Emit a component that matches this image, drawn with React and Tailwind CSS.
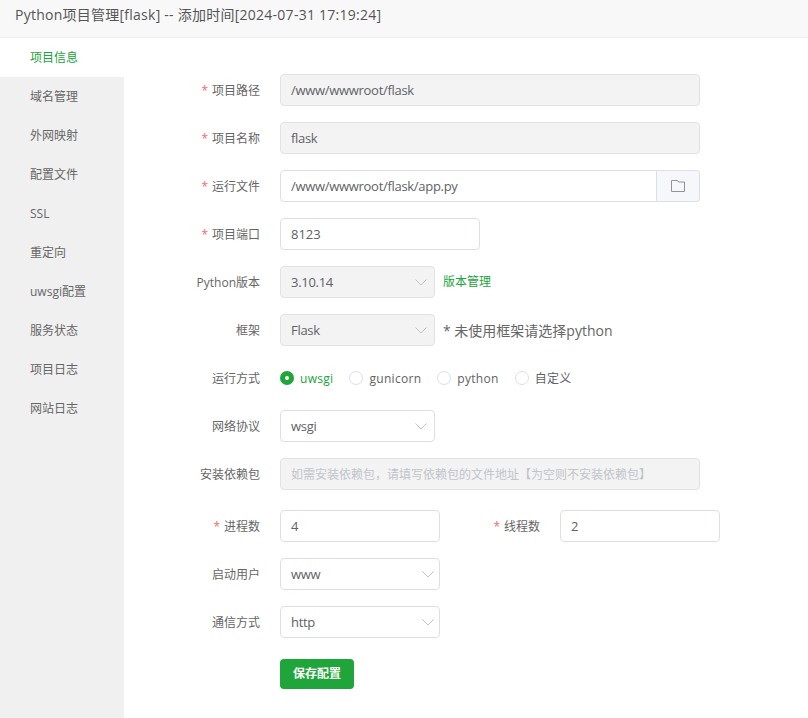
import React from "react";

const font = { fontFamily: '"Open Sans","Noto Sans CJK SC",sans-serif' };

const Chevron = () => (
  <svg width="14" height="14" viewBox="0 0 14 14" fill="none" stroke="#c0c4cc" strokeWidth="1" className="shrink-0">
    <path d="M1.5 4.5 L7 10 L12.5 4.5" />
  </svg>
);

function Label({ req, children }) {
  return (
    <div className="w-[260px] shrink-0 flex justify-end items-center pt-[2px] text-[12px] text-[#666]">
      {req && <span className="text-[#f56c6c] mr-[4px]">*</span>}
      <span>{children}</span>
    </div>
  );
}

function Box({ w, gray, children, cls = "" }) {
  return (
    <div className={`${w} h-8 shrink-0 flex items-center pl-[10px] border rounded-[4px] text-[13px] text-[#606266] ${gray ? "bg-[#f3f3f3] border-[#e2e2e2]" : "bg-white border-[#dcdfe6]"} ${cls}`}>
      <span className="pt-[2px] flex-1 min-w-0">{children}</span>
    </div>
  );
}

function Select({ w, gray, pr, children }) {
  return (
    <div className={`${w} ${pr} h-8 shrink-0 flex items-center justify-between pl-[10px] border rounded-[4px] text-[13px] text-[#606266] tracking-[-0.3px] ${gray ? "bg-[#f3f3f3] border-[#e2e2e2]" : "bg-white border-[#dcdfe6]"}`}>
      <span className="pt-[2px]">{children}</span>
      <Chevron />
    </div>
  );
}

function Row({ label, req, children, cls = "mb-4" }) {
  return (
    <div className={`flex items-center h-8 ${cls}`}>
      <Label req={req}>{label}</Label>
      <div className="ml-5 flex items-center">{children}</div>
    </div>
  );
}

function Radio({ on, children, cls = "" }) {
  return (
    <div className={`flex items-center ${cls}`}>
      {on ? (
        <span className="w-[14px] h-[14px] rounded-full bg-[#20a53a] flex items-center justify-center">
          <span className="w-1 h-1 rounded-full bg-white" />
        </span>
      ) : (
        <span className="w-[14px] h-[14px] rounded-full border border-[#dcdfe6] bg-white" />
      )}
      <span className={`ml-[6px] pt-[2px] text-[12px] tracking-[0.3px] ${on ? "text-[#20a53a]" : "text-[#606266]"}`}>{children}</span>
    </div>
  );
}

const menu = ["项目信息", "域名管理", "外网映射", "配置文件", "SSL", "重定向", "uwsgi配置", "服务状态", "项目日志", "网站日志"];

export default function App() {
  return (
    <div style={font} className="w-[808px] h-[718px] overflow-hidden bg-white flex flex-col">
      <div className="h-[38px] shrink-0 bg-[#f8f8f8] border-b border-[#eeeeee] pl-[15px] pb-[8px] flex items-center text-[14px] text-[#555] tracking-[0.25px]">
        Python项目管理[flask] -- 添加时间[2024-07-31 17:19:24]
      </div>
      <div className="flex flex-1 min-h-0">
        <div className="w-[124px] shrink-0 bg-[#f0f0f0]">
          {menu.map((m, i) => (
            <div key={m} className={`h-[39px] pl-[30px] flex items-center text-[12px] ${i === 0 ? "bg-white text-[#20a53a]" : "text-[#666]"}`}>
              {m}
            </div>
          ))}
        </div>
        <div className="flex-1 -ml-[124px] pt-[36px]">
          <Row req label="项目路径"><Box w="w-[420px]" gray cls="tracking-[-0.3px]">/www/wwwroot/flask</Box></Row>
          <Row req label="项目名称"><Box w="w-[420px]" gray cls="tracking-[-0.3px]">flask</Box></Row>
          <Row req label="运行文件">
            <div className="w-[420px] h-8 flex">
              <div className="flex-1 flex items-center pl-[10px] border border-[#dcdfe6] rounded-l-[4px] text-[13px] text-[#606266] tracking-[-0.3px]">
                <span className="pt-[2px]">/www/wwwroot/flask/app.py</span>
              </div>
              <div className="w-[43px] flex items-center justify-center bg-[#f5f7fa] border border-l-0 border-[#dcdfe6] rounded-r-[4px]">
                <svg width="14" height="12" viewBox="0 0 14 12" fill="none" stroke="#909399" strokeWidth="1">
                  <path d="M0.5 0.5 H6.5 L7.5 2 H13.5 V11.5 H0.5 Z" />
                </svg>
              </div>
            </div>
          </Row>
          <Row req label="项目端口"><Box w="w-[200px]">8123</Box></Row>
          <Row label="Python版本">
            <Select w="w-[155px]" pr="pr-[6px]" gray>3.10.14</Select>
            <span className="ml-2 text-[12px] text-[#20a53a]">版本管理</span>
          </Row>
          <Row label="框架">
            <Select w="w-[155px]" pr="pr-[6px]" gray>Flask</Select>
            <span className="ml-2 text-[14px] text-[#666]">* 未使用框架请选择python</span>
          </Row>
          <Row label="运行方式">
            <Radio on cls="mr-[16px]">uwsgi</Radio>
            <Radio cls="mr-[16px]">gunicorn</Radio>
            <Radio cls="mr-[16px]">python</Radio>
            <Radio>自定义</Radio>
          </Row>
          <Row label="网络协议"><Select w="w-[155px]" pr="pr-[6px]">wsgi</Select></Row>
          <Row label="安装依赖包" cls="mb-5">
            <Box w="w-[420px]" gray><span className="text-[12px] text-[#c0c4cc]">如需安装依赖包，请填写依赖包的文件地址【为空则不安装依赖包】</span></Box>
          </Row>
          <Row req label="进程数">
            <Box w="w-[160px]">4</Box>
            <div className="w-[100px] flex justify-end items-center pt-[2px] text-[12px] text-[#666]">
              <span className="text-[#f56c6c] mr-[4px]">*</span><span>线程数</span>
            </div>
            <Box w="w-[160px]" cls="ml-5">2</Box>
          </Row>
          <Row label="启动用户"><Select w="w-[160px]" pr="pr-[4px]">www</Select></Row>
          <Row label="通信方式" cls="mb-[21px]"><Select w="w-[160px]" pr="pr-[4px]">http</Select></Row>
          <div className="pl-[280px]">
            <button className="w-[74px] h-[30px] rounded-[4px] bg-[#20a53a] text-white text-[12px] font-semibold">保存配置</button>
          </div>
        </div>
      </div>
    </div>
  );
}
